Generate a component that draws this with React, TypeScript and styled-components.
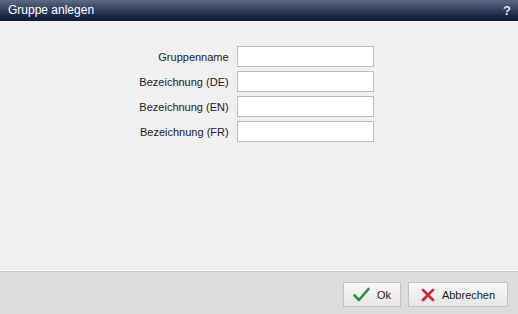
import React from "react";
import styled, { createGlobalStyle } from "styled-components";

const Global = createGlobalStyle`
  html, body { margin: 0; padding: 0; }
  body { font-family: Arial, "Liberation Sans", sans-serif; font-size: 12px; background: #f0f0f0; }
`;

const Dialog = styled.div`
  width: 518px;
  height: 314px;
  display: flex;
  flex-direction: column;
  background: #f0f0f0;
`;

const TitleBar = styled.div`
  height: 21px;
  flex: none;
  display: flex;
  align-items: center;
  justify-content: space-between;
  padding: 0 7px 0 8px;
  background: linear-gradient(#5d6a84 0%, #34425f 45%, #172846 75%, #0e1d38 100%);
  color: #ffffff;
`;

const Title = styled.span`
  font-size: 12px;
  line-height: 21px;
`;

const Help = styled.span`
  font-weight: bold;
  font-size: 13px;
  color: #dfe3ea;
`;

const Body = styled.div`
  flex: 1;
  display: flex;
  justify-content: center;
  padding-top: 25px;
  border-bottom: 1px solid #fafafa;
  box-shadow: inset 0 -5px 0 #ececec;
`;

const Form = styled.div`
  display: grid;
  grid-template-columns: auto 137px;
  column-gap: 8px;
  row-gap: 4px;
  align-items: center;
  align-self: flex-start;
  margin-left: -5px;
`;

const Label = styled.label`
  text-align: right;
  font-size: 11px;
  color: #222;
`;

const Input = styled.input`
  box-sizing: border-box;
  width: 137px;
  height: 21px;
  border: 1px solid #bdbdbd;
  background: #fff;
  margin: 0;
  padding: 2px 4px;
  font-family: inherit;
  font-size: 11px;
`;

const Footer = styled.div`
  height: 43px;
  flex: none;
  background: #dcdcdc;
  border-top: 1px solid #c9c9c9;
  display: flex;
  justify-content: flex-end;
  align-items: flex-start;
  gap: 7px;
  padding: 10px 10px 0 0;
  box-sizing: border-box;
`;

const Button = styled.button<{ $w: number }>`
  width: ${(p) => p.$w}px;
  height: 25px;
  box-sizing: border-box;
  border: 1px solid #c4c4c4;
  background: linear-gradient(#f7f7f7, #e6e6e6);
  display: flex;
  align-items: center;
  justify-content: center;
  gap: 7px;
  padding: 0;
  font-family: Arial, "Liberation Sans", sans-serif;
  font-size: 11px;
  color: #222;
`;

const Check = () => (
  <svg width="17" height="15" viewBox="0 0 17 15">
    <path d="M1.5 8.5 L6 13 L15.5 2" fill="none" stroke="#2f8f3c" strokeWidth="2.6" strokeLinecap="round" strokeLinejoin="round" />
  </svg>
);

const Cross = () => (
  <svg width="14" height="14" viewBox="0 0 14 14">
    <path d="M2 2 L12 12 M12 2 L2 12" fill="none" stroke="#cf2a3c" strokeWidth="2.8" strokeLinecap="round" />
  </svg>
);

const fields = ["Gruppenname", "Bezeichnung (DE)", "Bezeichnung (EN)", "Bezeichnung (FR)"];

export default function App() {
  return (
    <>
      <Global />
      <Dialog>
        <TitleBar>
          <Title>Gruppe anlegen</Title>
          <Help>?</Help>
        </TitleBar>
        <Body>
          <Form>
            {fields.map((f) => (
              <React.Fragment key={f}>
                <Label>{f}</Label>
                <Input type="text" />
              </React.Fragment>
            ))}
          </Form>
        </Body>
        <Footer>
          <Button $w={58}>
            <Check />
            Ok
          </Button>
          <Button $w={100}>
            <Cross />
            Abbrechen
          </Button>
        </Footer>
      </Dialog>
    </>
  );
}
